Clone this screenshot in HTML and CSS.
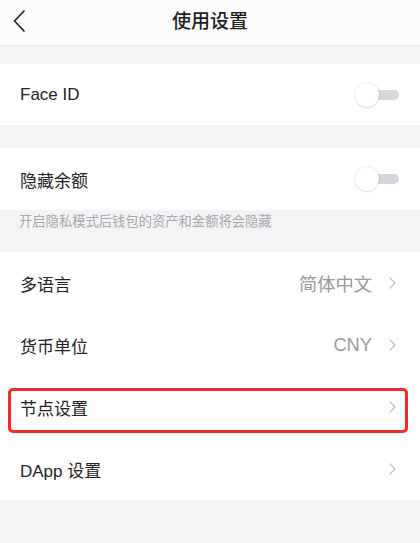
FILE: index.html
```html
<!DOCTYPE html>
<html lang="zh-CN">
<head>
<meta charset="utf-8">
<title>使用设置</title>
<link rel="stylesheet" href="styles.css">
</head>
<body>
<div class="page">
  <header class="nav">
    <span class="back">
      <svg width="12" height="22" viewBox="0 0 12 22"><path d="M11 1 L1.5 11 L11 21" fill="none" stroke="#222" stroke-width="1.7" stroke-linecap="round" stroke-linejoin="round"/></svg>
    </span>
    <h1 class="title">使用设置</h1>
  </header>

  <section class="group group-first">
    <div class="row row-face">
      <span class="label">Face ID</span>
      <span class="toggle"><span class="track"></span><span class="knob"></span></span>
    </div>
  </section>

  <section class="group group-second">
    <div class="row">
      <span class="label">隐藏余额</span>
      <span class="toggle"><span class="track"></span><span class="knob"></span></span>
    </div>
  </section>
  <p class="hint">开启隐私模式后钱包的资产和金额将会隐藏</p>

  <section class="group list">
    <div class="row">
      <span class="label">多语言</span>
      <span class="right"><span class="value">简体中文</span><svg class="chev" width="7" height="12" viewBox="0 0 7 12"><path d="M1 1 L6 6 L1 11" fill="none" stroke="#bdbdbd" stroke-width="1.3" stroke-linecap="round" stroke-linejoin="round"/></svg></span>
    </div>
    <div class="row">
      <span class="label">货币单位</span>
      <span class="right"><span class="value">CNY</span><svg class="chev" width="7" height="12" viewBox="0 0 7 12"><path d="M1 1 L6 6 L1 11" fill="none" stroke="#bdbdbd" stroke-width="1.3" stroke-linecap="round" stroke-linejoin="round"/></svg></span>
    </div>
    <div class="row row-marked">
      <span class="label">节点设置</span>
      <span class="right"><svg class="chev" width="7" height="12" viewBox="0 0 7 12"><path d="M1 1 L6 6 L1 11" fill="none" stroke="#bdbdbd" stroke-width="1.3" stroke-linecap="round" stroke-linejoin="round"/></svg></span>
      <span class="mark"></span>
    </div>
    <div class="row">
      <span class="label">DApp 设置</span>
      <span class="right"><svg class="chev" width="7" height="12" viewBox="0 0 7 12"><path d="M1 1 L6 6 L1 11" fill="none" stroke="#bdbdbd" stroke-width="1.3" stroke-linecap="round" stroke-linejoin="round"/></svg></span>
    </div>
  </section>
</div>
</body>
</html>
```

FILE: styles.css
```css
html, body {
  margin: 0;
  padding: 0;
}
body {
  background: #f3f4f6;
  font-family: "Liberation Sans", "Noto Sans CJK SC", sans-serif;
  color: #222;
}
.page {
  width: 420px;
  min-height: 543px;
  background: #f3f4f6;
}
.nav {
  height: 45px;
  background: #fcfcfc;
  border-bottom: 1px solid #e6e6e6;
  display: flex;
  align-items: center;
  justify-content: center;
  position: relative;
}
.back {
  position: absolute;
  left: 13px;
  top: 10px;
  display: flex;
}
.title {
  margin: 0;
  font-size: 19px;
  font-weight: 500;
  color: #1e1e1e;
  line-height: 1;
  margin-top: -3px;
}
.group {
  background: #fff;
}
.group-first {
  margin-top: 18px;
}
.group-second {
  margin-top: 23px;
}
.row {
  height: 62px;
  display: flex;
  align-items: center;
  justify-content: space-between;
  padding: 0 21px 0 20px;
  position: relative;
}
.row-face {
  height: 61px;
}
.label {
  font-size: 17px;
  color: #222;
}
.list .row {
  padding-right: 24px;
}
.toggle {
  width: 44px;
  height: 26px;
  position: relative;
  display: block;
}
.track {
  position: absolute;
  left: 10px;
  right: 0;
  top: 8px;
  height: 10px;
  border-radius: 5px;
  background: #d3d7db;
}
.knob {
  position: absolute;
  left: 0;
  top: 1px;
  width: 24px;
  height: 24px;
  border-radius: 50%;
  background: #fff;
  box-shadow: 0 0 2px rgba(0, 0, 0, 0.18), 0 1px 2px rgba(0, 0, 0, 0.08);
}
.hint {
  margin: 0;
  height: 42px;
  box-sizing: border-box;
  padding: 3px 0 0 19px;
  font-size: 13.3px;
  line-height: 18px;
  color: #a5a8ac;
}
.right {
  display: flex;
  align-items: center;
  gap: 17px;
}
.value {
  font-size: 18.3px;
  color: #999;
}
.chev {
  display: block;
}
.mark {
  position: absolute;
  left: 8px;
  top: 12px;
  width: 400px;
  height: 45px;
  box-sizing: border-box;
  border: 3px solid #f5292a;
  border-radius: 5px;
  pointer-events: none;
}
```
